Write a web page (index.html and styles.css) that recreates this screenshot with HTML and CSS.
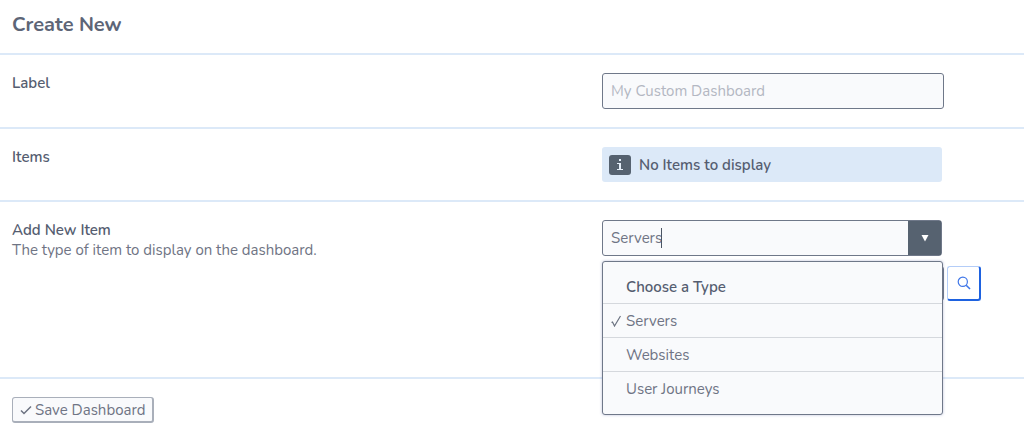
FILE: index.html
```html
<!DOCTYPE html>
<html lang="en">

<head>
    <meta charset="UTF-8">
    <meta name="viewport" content="width=device-width, initial-scale=1.0">
    <title>Create New Dashboard</title>
    <link rel="stylesheet" href="styles.css">
</head>

<body>

    <header class="page-header">
        <h1>Create New</h1>
    </header>

    <form class="dashboard-form">
        <div class="row">
            <label class="title" for="label">Label</label>
            <div>
                <input type="text" class="text-input" id="label" placeholder="My Custom Dashboard">
            </div>
        </div>

        <div class="row">
            <div class="title">Items</div>
            <div class="alert">
                <svg class="info" viewBox="0 0 22 20" aria-hidden="true">
                    <rect width="22" height="20" rx="3" fill="#566270" />
                    <path d="M10 4h2v2h-2zM8 8h4v6h2v1H8v-1h2V9H8z" fill="#e4edf8" />
                </svg>
                <span>No Items to display</span>
            </div>
        </div>

        <div class="row row-add">
            <div>
                <label class="title" for="type">Add New Item</label>
                <p>The type of item to display on the dashboard.</p>
            </div>
            <div class="picker">
                <div class="combo">
                    <input type="text" id="type" value="Servers" role="combobox" aria-expanded="true" aria-controls="types">
                    <span class="caret"></span>
                    <button type="button" class="toggle" aria-label="Toggle types">
                        <svg viewBox="0 0 8 8"><path d="M0.5 1h7L4 7.5z" fill="#fff" /></svg>
                    </button>
                </div>

                <div class="search">
                    <input type="text" class="text-input" aria-label="Search servers">
                    <button type="button" class="search-btn" aria-label="Search">
                        <svg viewBox="0 0 14 14" fill="none" stroke="#3f76e8" stroke-width="1.2">
                            <circle cx="5.8" cy="5.8" r="4.6" />
                            <path d="M9.2 9.2L13 13" stroke-width="1.6" />
                        </svg>
                    </button>
                </div>

                <!-- Open list of types -->
                <ul class="menu" id="types" role="listbox">
                    <li class="menu-title" role="presentation">Choose a Type</li>
                    <li role="option" aria-selected="true">
                        <svg class="tick" viewBox="0 0 10 12" fill="none" stroke="#6b7280" stroke-width="1.2">
                            <path d="M0.5 7.5l1-.4L3.5 11L9.5 1" />
                        </svg>
                        Servers
                    </li>
                    <li role="option">Websites</li>
                    <li role="option">User Journeys</li>
                </ul>
            </div>
        </div>

        <div class="actions">
            <button type="submit" class="save">
                <svg viewBox="0 0 12 10" fill="none" stroke="#6b7280" stroke-width="1.5">
                    <path d="M1 5.5L4 8.5L11 1.5" />
                </svg>
                Save Dashboard
            </button>
        </div>
    </form>

</body>

</html>
```
FILE: styles.css
```css
* {
    box-sizing: border-box;
}

body {
    margin: 0;
    font-family: Nunito, Lato, "Liberation Sans", sans-serif;
    font-size: 15px;
    line-height: 20px;
    color: #6f7484;
    background: #fff;
}

.page-header {
    padding: 11px 12px 14px;
    border-bottom: 2px solid #dce9f8;
}

h1 {
    margin: 0;
    font-size: 20px;
    line-height: 28px;
    color: #5d6577;
}

p {
    margin: 0;
}

input,
button {
    font: inherit;
    color: inherit;
}

.row {
    display: grid;
    grid-template-columns: 59% 1fr;
    align-items: start;
    padding: 18px 12px;
    border-bottom: 2px solid #dce9f8;
}

.row-add {
    min-height: 177px;
}

.title {
    display: block;
    font-weight: 600;
    color: #555d70;
}

.text-input {
    display: block;
    width: 342px;
    height: 36px;
    padding: 0 8px;
    background: #f9fafc;
    border: 1px solid #6f7889;
    border-radius: 3px;
}

.text-input::placeholder {
    color: #b3b7c2;
    opacity: 1;
}

.alert {
    display: flex;
    align-items: center;
    gap: 8px;
    width: 340px;
    height: 35px;
    padding: 0 7px;
    font-weight: 600;
    color: #555d70;
    background: #dce9f8;
    border-radius: 3px;
}

.info {
    width: 22px;
    height: 20px;
}

.picker {
    position: relative;
}

.combo {
    position: relative;
    display: flex;
    width: 340px;
    height: 36px;
    background: #f9fafc;
    border: 1px solid #6f7889;
    border-radius: 3px;
}

.combo input {
    flex: 1;
    min-width: 0;
    padding: 0 8px;
    background: none;
    border: none;
    outline: none;
}

/* text cursor after the typed value */
.caret {
    position: absolute;
    top: 7px;
    left: 58px;
    width: 1px;
    height: 20px;
    background: #4b5563;
}

.toggle {
    display: flex;
    align-items: center;
    justify-content: center;
    width: 33px;
    padding: 0;
    background: #566270;
    border: none;
}

.toggle svg {
    width: 8px;
    height: 8px;
}

.search {
    display: flex;
    gap: 3px;
    margin-top: 10px;
}

.search .text-input {
    height: 35px;
}

.search-btn {
    display: flex;
    align-items: center;
    justify-content: center;
    width: 34px;
    height: 35px;
    padding: 0;
    background: #fff;
    border: 1px solid #b4cdf8;
    border-right: 2px solid #1e62e0;
    border-bottom: 2px solid #1e62e0;
    border-radius: 3px;
}

.search-btn svg {
    width: 14px;
    height: 14px;
}

.menu {
    position: absolute;
    top: 41px;
    left: 0;
    width: 341px;
    margin: 0;
    padding: 8px 0;
    list-style: none;
    background: #f9fafc;
    border: 1px solid #6f7889;
    border-radius: 3px;
    box-shadow: 0 0 3px rgba(86, 98, 160, 0.4);
}

.menu li {
    position: relative;
    height: 34px;
    padding: 7px 23px 6px;
    border-bottom: 1px solid #d5d8dd;
}

.menu li:last-child {
    border-bottom: none;
}

.menu .menu-title {
    font-weight: 600;
    color: #555d70;
}

.tick {
    position: absolute;
    top: 11px;
    left: 8px;
    width: 10px;
    height: 12px;
}

.actions {
    padding: 18px 12px;
}

.save {
    display: flex;
    align-items: center;
    gap: 3px;
    height: 26px;
    padding: 0 7px;
    background: #f9fafc;
    border: 1px solid #a9afba;
    border-right: 2px solid #a9afba;
    border-bottom: 2px solid #a9afba;
    border-radius: 3px;
}

.save svg {
    width: 12px;
    height: 10px;
}
```
